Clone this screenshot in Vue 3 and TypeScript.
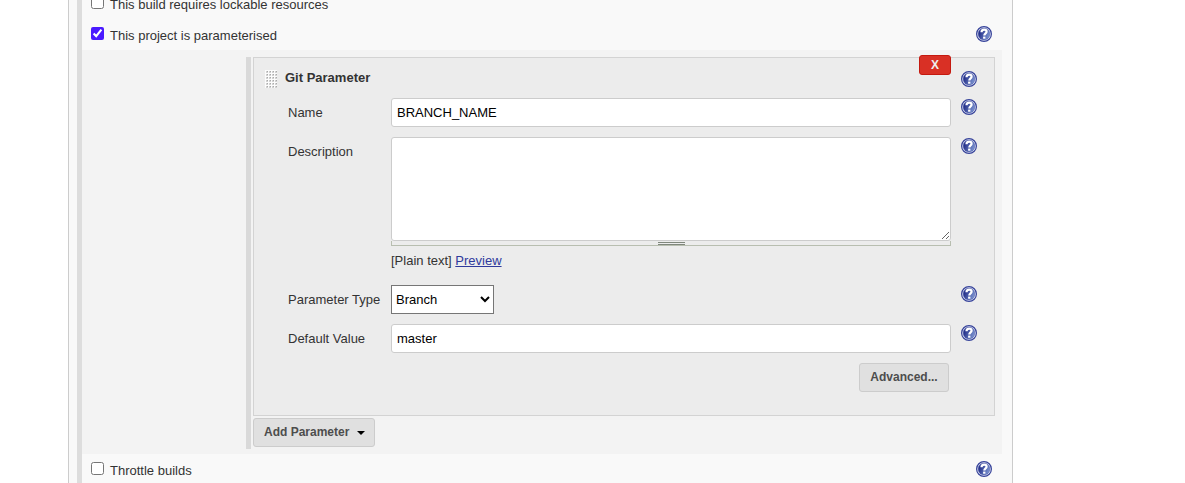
<script setup lang="ts">
import { ref, defineComponent, h } from 'vue'

const HelpButton = defineComponent({
  props: { topic: { type: String, required: true } },
  setup(props) {
    return () =>
      h('button', { type: 'button', class: 'help', 'aria-label': 'Help for feature: ' + props.topic }, [
        h('svg', { viewBox: '0 0 16 16', width: 16, height: 16, 'aria-hidden': 'true' }, [
          h('circle', { cx: 8, cy: 8, r: 7.4, fill: '#e8ecf8', stroke: '#37439a', 'stroke-width': 1.2 }),
          h('circle', { cx: 8, cy: 8, r: 5.9, fill: 'url(#help-fill)', stroke: '#4c5aa8', 'stroke-width': 0.5 }),
          h('path', {
            d: 'M5.5 6.2C5.5 4.3 6.6 3.6 8.1 3.6C9.7 3.6 10.6 4.4 10.6 5.7C10.6 7.4 8.3 7.4 8.3 9.6',
            fill: 'none',
            stroke: '#fff',
            'stroke-width': 2.2,
          }),
          h('rect', { x: 7.1, y: 10.6, width: 2.3, height: 2.1, fill: '#fff' }),
        ]),
      ])
  },
})

const lockable = ref(false)
const parameterised = ref(true)
const throttle = ref(false)
const name = ref('BRANCH_NAME')
const description = ref('')
const paramType = ref('Branch')
const defaultValue = ref('master')
const types = ['Tag', 'Branch', 'Branch or Tag', 'Revision', 'Pull Request']
</script>

<template>
  <main class="page">
    <svg class="defs" width="0" height="0" aria-hidden="true">
      <defs>
        <linearGradient id="help-fill" x1="0" y1="0.3" x2="1" y2="0.7">
          <stop offset="0.15" stop-color="#28348c" />
          <stop offset="1" stop-color="#7f98d4" />
        </linearGradient>
      </defs>
    </svg>
    <form class="panel" @submit.prevent>
      <div class="section">
        <div class="option">
          <input id="lockable" v-model="lockable" type="checkbox" />
          <label for="lockable">This build requires lockable resources</label>
        </div>
        <div class="option">
          <input id="parameterised" v-model="parameterised" type="checkbox" />
          <label for="parameterised">This project is parameterised</label>
          <HelpButton topic="This project is parameterised" />
        </div>

        <div class="nested">
          <div class="repeated">
            <section class="card">
              <button type="button" class="remove" aria-label="Delete parameter">X</button>
              <header class="card-head">
                <svg class="grip" width="12" height="18" aria-hidden="true">
                  <defs>
                    <pattern id="dots" width="3" height="3" patternUnits="userSpaceOnUse">
                      <rect width="3" height="3" fill="#fcfcfc" />
                      <rect x="1" y="1" width="2" height="2" fill="#d2d2d2" />
                      <rect x="2" y="1" width="1" height="1" fill="#aaa" />
                    </pattern>
                  </defs>
                  <rect width="12" height="18" fill="url(#dots)" />
                </svg>
                <b>Git Parameter</b>
                <HelpButton topic="Git Parameter" />
              </header>
              <div class="fields">
                <label for="name">Name</label>
                <input id="name" v-model="name" class="text" type="text" />
                <HelpButton topic="Name" />

                <label for="description">Description</label>
                <div>
                  <textarea id="description" v-model="description"></textarea>
                  <div class="sizer"><span></span></div>
                  <p class="format">[Plain text] <a href="#preview">Preview</a></p>
                </div>
                <HelpButton topic="Description" />

                <label for="type">Parameter Type</label>
                <select id="type" v-model="paramType">
                  <option v-for="t in types" :key="t">{{ t }}</option>
                </select>
                <HelpButton topic="Parameter Type" />

                <label for="default">Default Value</label>
                <input id="default" v-model="defaultValue" class="text" type="text" />
                <HelpButton topic="Default Value" />

                <button type="button" class="btn advanced">Advanced...</button>
              </div>
            </section>
            <button type="button" class="btn add">
              Add Parameter
              <svg class="caret" width="8" height="4" viewBox="0 0 8 4" aria-hidden="true">
                <path d="M0 0H8L4 4Z" fill="#000" />
              </svg>
            </button>
          </div>
        </div>

        <div class="option">
          <input id="throttle" v-model="throttle" type="checkbox" />
          <label for="throttle">Throttle builds</label>
          <HelpButton topic="Throttle builds" />
        </div>
      </div>
    </form>
  </main>
</template>

<style>
body {
  margin: 0;
  background: #fff;
}
</style>

<style scoped>
.page {
  height: 100vh;
  overflow: hidden;
  font-family: "Liberation Sans", Arial, sans-serif;
  font-size: 13px;
  color: #333;
}
.page * {
  box-sizing: border-box;
}
.defs {
  position: absolute;
}
.panel {
  min-height: 100%;
  margin: 0 172px 0 68px;
  padding: 0 10px 0 8px;
  border: solid #ccc;
  border-width: 0 1px;
  background: #f9f9f9;
  display: flow-root;
}
.section {
  margin-top: -12px;
  border-left: 5px solid #ddd;
}
.option {
  display: flex;
  align-items: flex-start;
  height: 31px;
  padding: 8px 10px 0 9px;
}
.option input {
  margin: 0 6px 0 0;
  width: 13px;
  height: 13px;
  accent-color: #4a1aff;
}
.option label {
  line-height: 17px;
}
:deep(.help) {
  flex: none;
  width: 16px;
  height: 16px;
  margin: 0 0 0 auto;
  padding: 0;
  border: 0;
  background: none;
}
:deep(.help svg) {
  display: block;
}
.option :deep(.help) {
  margin-top: -1px;
}
.nested {
  padding: 7px 7px 5px 164px;
  background: #f3f3f3;
}
.repeated {
  padding: 0 0 2px 2px;
  border-left: 5px solid #d9d9d9;
}
.card {
  position: relative;
  padding: 12px 17px 23px 11px;
  border: 1px solid #d3d3d3;
  background: #ececec;
}
.remove {
  position: absolute;
  top: -3px;
  right: 43px;
  width: 32px;
  height: 20px;
  padding: 0;
  border: 1px solid #c4190f;
  border-radius: 3px;
  background: #d93025;
  color: #eee;
  font: bold 12px "Liberation Sans", Arial, sans-serif;
}
.card-head {
  display: flex;
  align-items: center;
  height: 18px;
  margin-bottom: 10px;
}
.card-head b {
  line-height: 16px;
  padding-bottom: 1px;
  align-self: flex-start;
}
.grip {
  margin-right: 8px;
}
.fields {
  display: grid;
  grid-template-columns: 103px 1fr 26px;
  row-gap: 10px;
  margin-left: 23px;
}
.fields label {
  line-height: 29px;
}
.fields :deep(.help) {
  margin-top: 1px;
}
.text,
textarea,
select {
  display: block;
  width: 100%;
  height: 29px;
  margin: 0;
  padding: 5px;
  border: 1px solid #ccc;
  border-radius: 3px;
  background: #fff;
  color: #000;
  font: inherit;
}
textarea {
  height: 104px;
  resize: vertical;
}
select {
  width: 103px;
  padding: 0;
  border-color: #767676;
  border-radius: 0;
}
.sizer {
  display: flex;
  justify-content: center;
  height: 5px;
  padding-top: 1px;
  border: solid #b8beb0;
  border-width: 0 1px 1px;
}
.sizer span {
  width: 27px;
  height: 3px;
  border: solid #7f877c;
  border-width: 1px 0;
}
.format {
  height: 29px;
  margin: 0;
  line-height: 29px;
}
.format a {
  color: #2f3a9c;
}
.btn {
  height: 29px;
  padding: 0 10px 2px;
  border: 1px solid #ccc;
  border-radius: 3px;
  background: #e0e0e0;
  color: #4d4d4d;
  font: bold 12px "Liberation Sans", Arial, sans-serif;
}
.advanced {
  grid-column: 2;
  justify-self: end;
  width: 90px;
  margin-right: 2px;
}
.add {
  display: flex;
  align-items: center;
  gap: 8px;
  margin-top: 2px;
  padding: 0 9px 2px 10px;
}
.caret {
  margin-top: 2px;
}
</style>
